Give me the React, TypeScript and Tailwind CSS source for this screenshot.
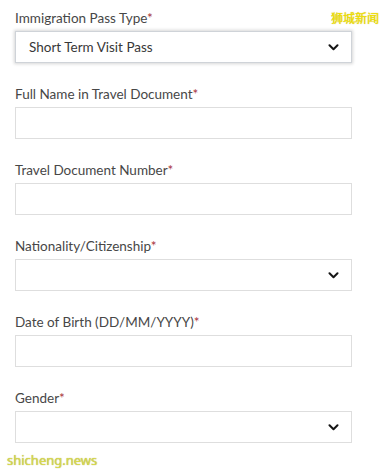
import React from 'react';

type Field = {
  label: string;
  kind: 'input' | 'select';
  value?: string;
  focused?: boolean;
};

const fields: Field[] = [
  { label: 'Immigration Pass Type', kind: 'select', value: 'Short Term Visit Pass', focused: true },
  { label: 'Full Name in Travel Document', kind: 'input' },
  { label: 'Travel Document Number', kind: 'input' },
  { label: 'Nationality/Citizenship', kind: 'select' },
  { label: 'Date of Birth (DD/MM/YYYY)', kind: 'input' },
  { label: 'Gender', kind: 'select' },
];

const Chevron = () => (
  <svg width="11" height="7" viewBox="0 0 11 7" fill="none">
    <path d="M1.5 1.3 L5.5 5.3 L9.5 1.3" stroke="#151515" strokeWidth="2" strokeLinecap="round" strokeLinejoin="round" />
  </svg>
);

const App = () => {
  return (
    <div className="relative w-[392px] h-[470px] bg-white overflow-hidden font-['Lato','Liberation_Sans',sans-serif]">
      <div className="flex flex-col pt-[10px] pl-[15px] w-[352px]">
        {fields.map((f) => (
          <div key={f.label} className="flex flex-col mb-[23px]">
            <label className="text-[13.5px] leading-[16px] text-[#474747]">
              {f.label}
              <span className="text-[#a8323a]">*</span>
            </label>
            <div
              className={`mt-[5px] h-[32px] flex items-center justify-between pl-[13px] pr-[12px] bg-white border ${
                f.focused
                  ? 'border-[#cfd3d8] shadow-[0_0_3px_1px_rgba(0,0,0,0.16)]'
                  : 'border-[#dedede]'
              }`}
            >
              <span className="text-[13.5px] text-[#383838]">{f.value ?? ''}</span>
              {f.kind === 'select' && <Chevron />}
            </div>
          </div>
        ))}
      </div>

      {/* watermarks */}
      <div className="absolute top-[10px] left-[331px] text-[12px] leading-[16px] text-[#f2e000] font-['Noto_Sans_CJK_SC',sans-serif] [text-shadow:0_0_1px_#c0b000]">
        狮城新闻
      </div>
      <div className="absolute top-[452px] left-[7px] text-[13px] leading-[16px] text-[#d8d850] font-['Noto_Sans','Liberation_Sans',sans-serif] [text-shadow:0_0_1px_#a0a028]">
        shicheng.news
      </div>
    </div>
  );
};

export default App;
